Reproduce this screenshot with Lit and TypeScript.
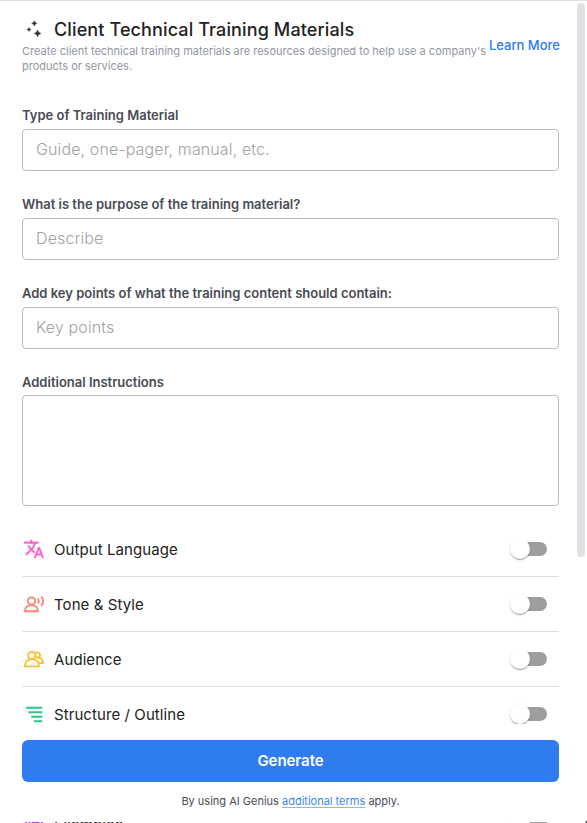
import { LitElement, html, svg, css } from "lit";
import { customElement, property } from "lit/decorators.js";

const icons: Record<string, unknown> = {
  language: svg`<g transform="translate(1.2 1.2) scale(.9)" style="stroke-width:.3;fill:currentColor"><path d="M12.870 15.070l-2.540-2.510.03-.03A17.520 17.520 0 0 0 14.070 6H17V4h-7V2H8v2H1v1.990h11.170C11.500 7.920 10.440 9.750 9 11.350 8.070 10.320 7.300 9.190 6.690 8h-2c.73 1.630 1.730 3.170 2.980 4.560l-5.090 5.020L4 19l5-5 3.110 3.110.76-2.040zM18.500 10h-2L12 22h2l1.120-3h4.750L21 22h2l-4.500-12zm-2.620 7l1.620-4.330L19.120 17h-3.240z"/></g>`,
  tone: svg`<circle cx="9.500" cy="9" r="3.700"/><path d="M2.900 19.200c0-3.800 2.700-6 6.500-6s6.500 2.200 6.500 6zM15.800 6.500c1.100 1.500 1.100 3.500 0 5M19.200 4.300c2.400 2.900 2.400 6.700 0 9.600"/>`,
  audience: svg`<circle cx="9.700" cy="8.400" r="3.500"/><path d="M2.900 19.300c0-4.300 2.700-7.200 7-7.200s7 2.900 7 7.200zM13.200 6.200c1.700-1.600 4.900-.7 4.900 1.800 0 1.300-.9 2.200-2.200 2.400M13.400 8.400c0 1.300 1 2.200 2.500 2.200 3 .1 5 2.200 5.300 5.500h-4.800"/>`,
  outline: svg`<path d="M4 5.700h16.300M6.400 10.200h13.900M9.200 14.700h11.100M12 19.200h8.300"/>`,
  examples: svg`<path d="M4.100 14v-4M7.500 14v-4M9.700 10.900h7.600M19 10.900h2"/>`,
};

@customElement("text-field")
class TextField extends LitElement {
  @property() label = "";
  @property() hint = "";
  @property({ type: Boolean }) multiline = false;

  static styles = css`
    :host { display: flex; flex-direction: column; }
    label { font-size: 13px; font-weight: 600; line-height: 20px; color: #484b54; margin-bottom: 4px; }
    .area-label { margin-bottom: 3px; }
    input, textarea {
      box-sizing: border-box; width: 100%; margin: 0; border: 1px solid #bdbdbd; border-radius: 4px;
      background: #fff; padding: 0 13px 2px; outline: none; resize: none;
      font: 300 16px/24px Inter, sans-serif; letter-spacing: 0.12px; color: #222;
    }
    input { height: 42px; }
    textarea { display: block; height: 111px; }
    ::placeholder { color: #a2a2a2; opacity: 1; }
  `;

  render() {
    return this.multiline
      ? html`<label class="area-label">${this.label}</label><textarea></textarea>`
      : html`<label>${this.label}</label><input placeholder=${this.hint} />`;
  }
}

@customElement("option-row")
class OptionRow extends LitElement {
  @property() label = "";
  @property() icon = "";
  @property() tint = "";

  static styles = css`
    :host { display: flex; align-items: center; box-sizing: border-box; height: 55px; border-bottom: 1px solid #e0e0e0; }
    svg { width: 24px; height: 24px; margin-right: 8px; fill: none; stroke: currentColor; stroke-width: 1.85; flex: none; }
    .label { flex: 1; font-size: 15px; line-height: 24px; padding-top: 2px; color: #222; letter-spacing: 0.08px; }
    .switch { width: 34px; height: 14px; margin-right: 12px; border-radius: 7px; background: #9e9e9e; display: flex; align-items: center; }
    .thumb { flex: none; width: 20px; height: 20px; margin-left: -3px; border-radius: 50%; background: #fff;
      box-shadow: 0 2px 1px -1px rgba(0,0,0,.2), 0 1px 1px rgba(0,0,0,.14), 0 1px 3px rgba(0,0,0,.12); }
  `;

  render() {
    return html`
      <svg viewBox="0 0 24 24" style="color:${this.tint}">${icons[this.icon]}</svg>
      <span class="label">${this.label}</span>
      <span class="switch"><span class="thumb"></span></span>
    `;
  }
}

@customElement("app-root")
class AppRoot extends LitElement {
  static styles = css`
    :host {
      display: block; position: relative; box-sizing: border-box; height: 823px; overflow: hidden;
      border-top: 1px solid #e0e0e0; background: #fff; padding: 16px 28px 0 22px;
      font-family: Inter, sans-serif; color: #222;
    }
    header { display: flex; align-items: center; margin-right: -2px; }
    .intro { flex: 1; }
    .heading { display: flex; align-items: center; height: 26px; }
    .spark { width: 24px; height: 24px; margin-right: 8px; fill: #30333d; stroke: #30333d; stroke-width: .4; }
    h1 { margin: 0; font-size: 18px; line-height: 26px; font-weight: 500; color: #222; letter-spacing: 0.12px; white-space: nowrap; }
    p { margin: 1px 0 0; font-size: 11px; line-height: 15px; color: #9296a0; white-space: nowrap; }
    .learn { font-size: 13px; font-weight: 500; line-height: 20px; padding: 0 1px 2px 0; color: #2e7ced; text-decoration: none; white-space: nowrap; }
    .fields { display: flex; flex-direction: column; gap: 23px; margin-top: 31px; padding-bottom: 16px; }
    .last { margin-top: 55px; }
    footer { position: absolute; left: 0; top: 723px; width: 576px; height: 98px; box-sizing: border-box; padding: 16px 17px 0 22px; background: #fff; }
    button { display: block; width: 100%; height: 42px; border: 0; border-radius: 6px; background: #2e7ced; color: #fff; font: 600 15px/24px Inter, sans-serif; letter-spacing: -0.05px; }
    .terms { text-align: center; font-size: 11px; line-height: 16px; margin-top: 11px; color: #484b54; }
    .terms a { color: #4285ee; text-decoration: underline; text-decoration-thickness: 1px; text-decoration-color: #8db7f7; text-underline-offset: 2px; }
    .scrollbar { position: absolute; left: 577px; top: 2px; width: 8px; height: 554px; border-radius: 4px; background: #dfe1e6; }
    .grip { position: absolute; right: 0; bottom: 0; width: 2px; height: 3px; background: #444; clip-path: polygon(100% 0, 100% 100%, 0 100%); }
  `;

  render() {
    return html`
      <header>
        <div class="intro">
          <div class="heading">
            <svg class="spark" viewBox="0 0 24 24">
              <path d="M12.300 2.700 13.200 4.500 15 5.400l-1.800.9-.9 1.800-.9-1.800-1.800-.9 1.800-.9zM7 9.400l.7 1.400 1.400.7-1.400.7-.7 1.400-.7-1.400-1.400-.7 1.400-.7zM15.600 12l1.200 2.200 2.200 1.200-2.200 1.200-1.200 2.200-1.200-2.200-2.200-1.200 2.200-1.200z"/>
            </svg>
            <h1>Client Technical Training Materials</h1>
          </div>
          <p>Create client technical training materials are resources designed to help use a company's<br />products or services.</p>
        </div>
        <a class="learn">Learn More</a>
      </header>
      <div class="fields">
        <text-field label="Type of Training Material" hint="Guide, one-pager, manual, etc."></text-field>
        <text-field label="What is the purpose of the training material?" hint="Describe"></text-field>
        <text-field label="Add key points of what the training content should contain:" hint="Key points"></text-field>
        <text-field label="Additional Instructions" multiline></text-field>
      </div>
      <option-row label="Output Language" icon="language" tint="#f95fc9"></option-row>
      <option-row label="Tone &amp; Style" icon="tone" tint="#ff8577"></option-row>
      <option-row label="Audience" icon="audience" tint="#fcc02e"></option-row>
      <option-row label="Structure / Outline" icon="outline" tint="#2dc581"></option-row>
      <option-row class="last" label="Examples" icon="examples" tint="#b43df0"></option-row>
      <footer>
        <button>Generate</button>
        <div class="terms">By using AI Genius <a>additional terms</a> apply.</div>
      </footer>
      <div class="scrollbar"></div>
      <div class="grip"></div>
    `;
  }
}
